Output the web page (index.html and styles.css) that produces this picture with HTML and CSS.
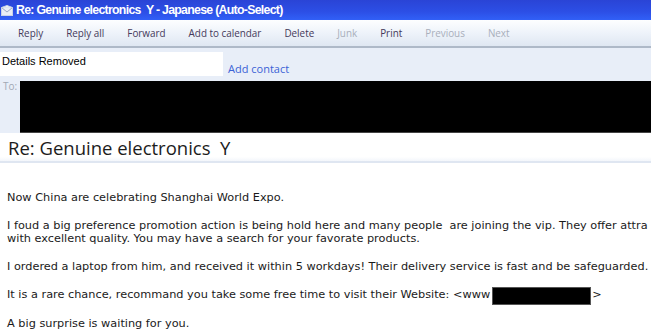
FILE: index.html
```html
<!DOCTYPE html>
<html lang="en">
<head>
  <meta charset="UTF-8" />
  <title>Re: Genuine electronics Y</title>
  <link rel="stylesheet" href="styles.css">
</head>
<body>
  <div class="titlebar">
    <svg class="mail-icon" width="12" height="11" viewBox="0 0 12 11">
      <rect x="0.5" y="2.5" width="11" height="8" fill="#e8ecf6" stroke="#c9d2e6"/>
      <path d="M0.5 2.5 L6 7 L11.5 2.5" fill="none" stroke="#9aa6c4"/>
      <path d="M0.5 2.5 L6 0.5 L11.5 2.5" fill="#f4f6fb" stroke="#c9d2e6"/>
    </svg>
    <span>Re: Genuine electronics&nbsp; Y - Japanese (Auto-Select)</span>
  </div>

  <div class="toolbar">
    <a>Reply</a>
    <a>Reply all</a>
    <a>Forward</a>
    <a>Add to calendar</a>
    <a>Delete</a>
    <a class="off">Junk</a>
    <a>Print</a>
    <a class="off">Previous</a>
    <a class="off">Next</a>
  </div>

  <div class="header">
    <div class="from-row">
      <div class="from-box">Details Removed</div>
      <a class="add-contact">Add contact</a>
    </div>
    <div class="to-row">
      <span class="to-label">To:</span>
      <div class="redact to-box"></div>
    </div>
  </div>

  <div class="subject">Re: Genuine electronics&nbsp; Y</div>

  <div class="body">
    <p>Now China are celebrating Shanghai World Expo.</p>
    <p>I foud a big preference promotion action is being hold here and many people&nbsp; are joining the vip. They offer attra<br>with excellent quality. You may have a search for your favorate products.</p>
    <p>I ordered a laptop from him, and received it within 5 workdays! Their delivery service is fast and be safeguarded.</p>
    <p>It is a rare chance, recommand you take some free time to visit their Website: &lt;www<span class="redact link-box"></span>&gt;</p>
    <p>A big surprise is waiting for you.</p>
  </div>
</body>
</html>
```

FILE: styles.css
```css
* {
  margin: 0;
  padding: 0;
  box-sizing: border-box;
}

html, body {
  overflow: hidden;
}

body {
  width: 651px;
  height: 336px;
  background: #fff;
  font-family: 'DejaVu Sans', sans-serif;
}

.titlebar {
  height: 20px;
  display: flex;
  align-items: center;
  gap: 3px;
  padding-left: 1px;
  background: linear-gradient(#2a44d6, #2c4fe6 60%, #3160f7);
  color: #fff;
  font-family: 'Liberation Sans', sans-serif;
  font-weight: bold;
  font-size: 12.3px;
  letter-spacing: -0.7px;
  white-space: nowrap;
}

.toolbar {
  height: 28px;
  display: flex;
  align-items: center;
  gap: 23px;
  padding-left: 18px;
  background: linear-gradient(#fdfeff, #eef3fa 50%, #dfe7f2);
  border-bottom: 2px solid #aeb9c8;
  font-family: 'Open Sans', sans-serif;
  font-size: 9.9px;
  color: #45395a;
}

.toolbar .off {
  color: #a9afbb;
}

.header {
  background: #e8eef8;
  padding-top: 4px;
}

.from-row {
  display: flex;
  align-items: flex-end;
  gap: 5px;
}

.from-box {
  width: 223px;
  height: 24px;
  background: #fff;
  padding: 3px 2px;
  font-family: 'Liberation Sans', sans-serif;
  font-size: 11px;
  color: #000;
}

.add-contact {
  font-family: 'Open Sans', sans-serif;
  font-size: 11px;
  color: #3b62d6;
  line-height: 14px;
}

.to-row {
  display: flex;
  align-items: flex-start;
  padding-top: 5px;
}

.to-label {
  width: 20px;
  padding-left: 3px;
  margin-top: -2px;
  font-family: 'Open Sans', sans-serif;
  font-size: 10px;
  color: #a2a8b4;
}

.redact {
  background: #000;
}

.to-box {
  flex: 1;
  height: 52px;
  border-bottom: 1px solid #444;
}

.subject {
  height: 30px;
  padding: 2px 0 0 8px;
  background: linear-gradient(#fff 85%, #f3f6fb);
  border-bottom: 2px solid #dfe6f1;
  font-family: 'Open Sans', sans-serif;
  font-size: 18.5px;
  color: #1c1c1c;
}

.body {
  padding: 28px 0 0 7px;
  font-size: 11.3px;
  line-height: 13px;
  color: #1a1a1a;
  white-space: nowrap;
}

.body p {
  margin-bottom: 15px;
}

.link-box {
  display: inline-block;
  width: 99px;
  height: 18px;
  margin: -3px 1px -3px 2px;
  vertical-align: -4px;
  border: 1px solid #555;
}
```
